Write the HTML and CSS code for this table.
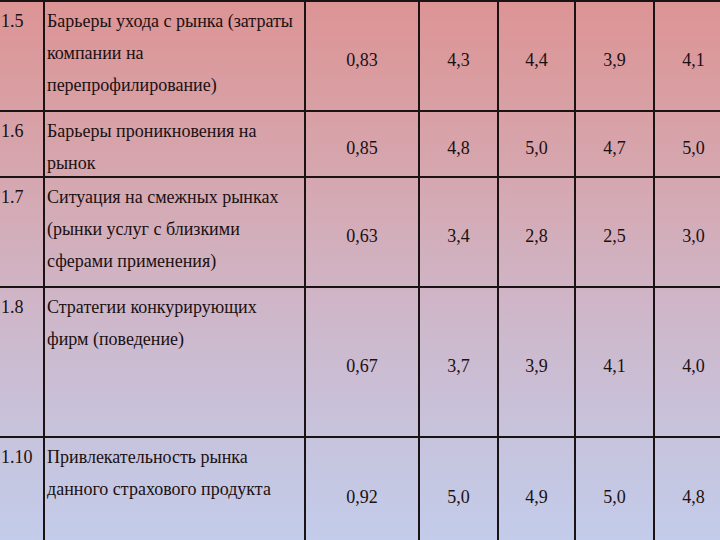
FILE: index.html
```html
<!DOCTYPE html>
<html lang="ru">
<head>
<meta charset="utf-8">
<title>Таблица</title>
<link rel="stylesheet" href="styles.css">
</head>
<body>
<div class="sheet">
  <div class="cell idx f1"><span class="t">1.5</span></div>
  <div class="cell name f1"><span class="t">Барьеры ухода с рынка (затраты</span><br><span class="t">компании на</span><br><span class="t">перепрофилирование)</span></div>
  <div class="cell val f1"><span class="t">0,83</span></div><div class="cell val f1"><span class="t">4,3</span></div><div class="cell val f1"><span class="t">4,4</span></div><div class="cell val f1"><span class="t">3,9</span></div><div class="cell val f1"><span class="t">4,1</span></div>

  <div class="cell idx f1"><span class="t">1.6</span></div>
  <div class="cell name f1"><span class="t">Барьеры проникновения на</span><br><span class="t">рынок</span></div>
  <div class="cell val f1"><span class="t">0,85</span></div><div class="cell val f1"><span class="t">4,8</span></div><div class="cell val f1"><span class="t">5,0</span></div><div class="cell val f1"><span class="t">4,7</span></div><div class="cell val f1"><span class="t">5,0</span></div>

  <div class="cell idx f1"><span class="t">1.7</span></div>
  <div class="cell name f1"><span class="t">Ситуация на смежных рынках</span><br><span class="t">(рынки услуг с близкими</span><br><span class="t">сферами применения)</span></div>
  <div class="cell val f1"><span class="t">0,63</span></div><div class="cell val f1"><span class="t">3,4</span></div><div class="cell val f1"><span class="t">2,8</span></div><div class="cell val f1"><span class="t">2,5</span></div><div class="cell val f1"><span class="t">3,0</span></div>

  <div class="cell idx f1"><span class="t">1.8</span></div>
  <div class="cell name f1"><span class="t">Стратегии конкурирующих</span><br><span class="t">фирм (поведение)</span></div>
  <div class="cell val f1"><span class="t">0,67</span></div><div class="cell val f1"><span class="t">3,7</span></div><div class="cell val f1"><span class="t">3,9</span></div><div class="cell val f1"><span class="t">4,1</span></div><div class="cell val f1"><span class="t">4,0</span></div>

  <div class="cell idx f1"><span class="t">1.10</span></div>
  <div class="cell name f1"><span class="t">Привлекательность рынка</span><br><span class="t">данного страхового продукта</span></div>
  <div class="cell val f1"><span class="t">0,92</span></div><div class="cell val f1"><span class="t">5,0</span></div><div class="cell val f1"><span class="t">4,9</span></div><div class="cell val f1"><span class="t">5,0</span></div><div class="cell val f1"><span class="t">4,8</span></div>
</div>
</body>
</html>
```

FILE: styles.css
```css
body { margin: 0; font-size: 18px; }
.f1 { font-family: "Liberation Serif"; }
.t { font-family: "Liberation Serif"; }
.sheet {
  display: grid;
  grid-template-columns: 45px 261px 114px 79px 77px 79px 79px;
  grid-template-rows: 110px 66px 110px 150px 112px;
  width: 734px;
  height: 552px;
  border-top: 2px solid #1b1214;
  background: linear-gradient(180deg, #dd9494 0%, #d6a6ae 30%, #cfb6c8 55%, #c7c3dc 78%, #c2cdec 100%);
  color: #1b1012;
}
.cell {
  box-sizing: border-box;
  border-right: 2px solid #1b1214;
  border-bottom: 2px solid #1b1214;
  white-space: nowrap;
}
.idx, .name {
  line-height: 32px;
  padding-top: 3px;
}
.idx { padding-left: 1px; }
.name { padding-left: 2px; }
.val {
  display: flex;
  align-items: center;
  justify-content: center;
  padding-top: 8px;
  line-height: normal;
}
```
